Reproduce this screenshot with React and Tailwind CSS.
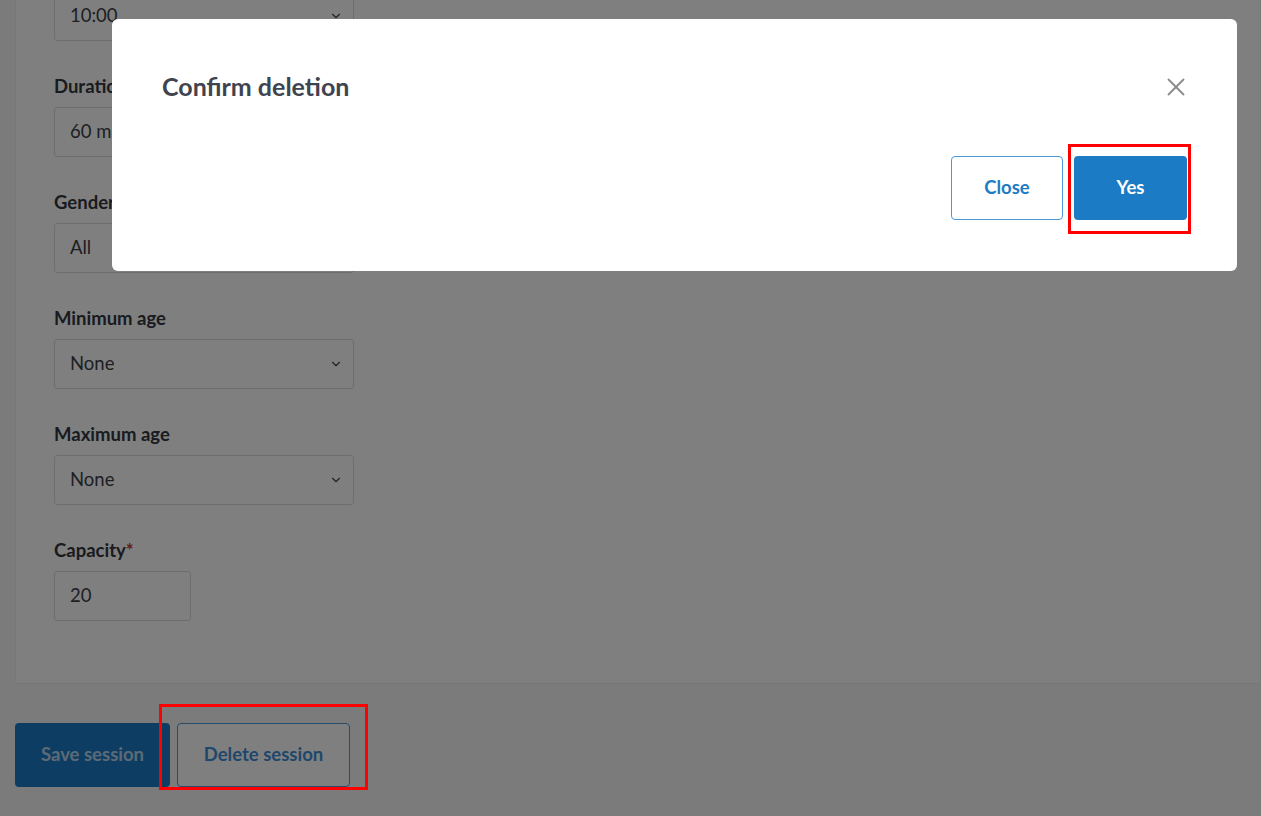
import React from "react";
import { ChevronDown, X } from "lucide-react";

const font = { fontFamily: "Lato, 'Open Sans', sans-serif" };

const Label = ({ children, required }) => (
  <div className="text-[18.5px] leading-6 font-bold text-[#333740] mb-[9px]">
    {children}
    {required && <span className="text-[#c0392b]">*</span>}
  </div>
);

const Select = ({ value }) => (
  <div className="w-[300px] h-[50px] border border-[#d9dbde] rounded-[3px] bg-white flex items-center justify-between pl-[15px] pr-[10px] text-[18.5px] text-[#3b3f46]">
    <span>{value}</span>
    <ChevronDown size={14} strokeWidth={2} className="text-[#444]" />
  </div>
);

const Input = ({ value, width = "w-[300px]" }) => (
  <div className={`${width} h-[50px] border border-[#d9dbde] rounded-[3px] bg-white flex items-center pl-[15px] text-[18.5px] text-[#3b3f46]`}>
    {value}
  </div>
);

const Field = ({ label, required, children, last }) => (
  <div className={last ? "" : "mb-[33px]"}>
    <Label required={required}>{label}</Label>
    {children}
  </div>
);

export default function App() {
  return (
    <div style={font} className="relative h-[816px] w-full overflow-hidden bg-[#f6f7f8]">
      <div className="pl-[15px]">
        <div className="-mt-[10px] bg-white border border-[#eceef0] rounded-l-[3px] pl-[38px] pb-[62px]">
          <div className="mb-[33px]">
            <Select value="10:00" />
          </div>
          <Field label="Duration">
            <Input value="60 minutes" />
          </Field>
          <Field label="Gender">
            <Select value="All" />
          </Field>
          <Field label="Minimum age">
            <Select value="None" />
          </Field>
          <Field label="Maximum age">
            <Select value="None" />
          </Field>
          <Field label="Capacity" required last>
            <Input value="20" width="w-[137px]" />
          </Field>
        </div>

        <div className="mt-[39px] flex gap-[7px]">
          <button className="h-[64px] w-[155px] rounded-[4px] bg-[#1b7bc6] text-[18.5px] font-bold text-[#ffffff]/70">
            Save session
          </button>
          <button className="relative h-[64px] w-[173px] rounded-[4px] border border-[#4a98d8] bg-white text-[18.5px] font-bold text-[#3e8fd6]">
            Delete session
            <span className="absolute z-20 -left-[19px] -top-[20px] w-[209px] h-[86px] border-[3px] border-[#ff0000] pointer-events-none" />
          </button>
        </div>
      </div>

      <div className="fixed inset-0 z-10 bg-black/50 pl-[112px] pr-[24px] pt-[19px]">
        <div className="bg-white rounded-[6px] h-[252px] px-[50px] pt-[50px] flex flex-col">
          <div className="flex items-center justify-between h-[36px]">
            <h2 className="text-[25px] font-bold text-[#3f4451]">Confirm deletion</h2>
            <X size={30} strokeWidth={1.5} className="text-[#8c8c8c] -mr-[4px]" />
          </div>
          <div className="mt-[51px] flex justify-end gap-[11px]">
            <button className="h-[64px] w-[112px] rounded-[4px] border border-[#4a98d8] bg-white text-[18.5px] font-bold text-[#1e7bc3]">
              Close
            </button>
            <button className="relative h-[64px] w-[113px] rounded-[4px] bg-[#1b7bc4] text-[18.5px] font-bold text-white">
              Yes
              <span className="absolute -left-[6px] -top-[12px] -right-[4px] -bottom-[14px] border-[3px] border-[#ff0000] pointer-events-none" />
            </button>
          </div>
        </div>
      </div>
    </div>
  );
}
